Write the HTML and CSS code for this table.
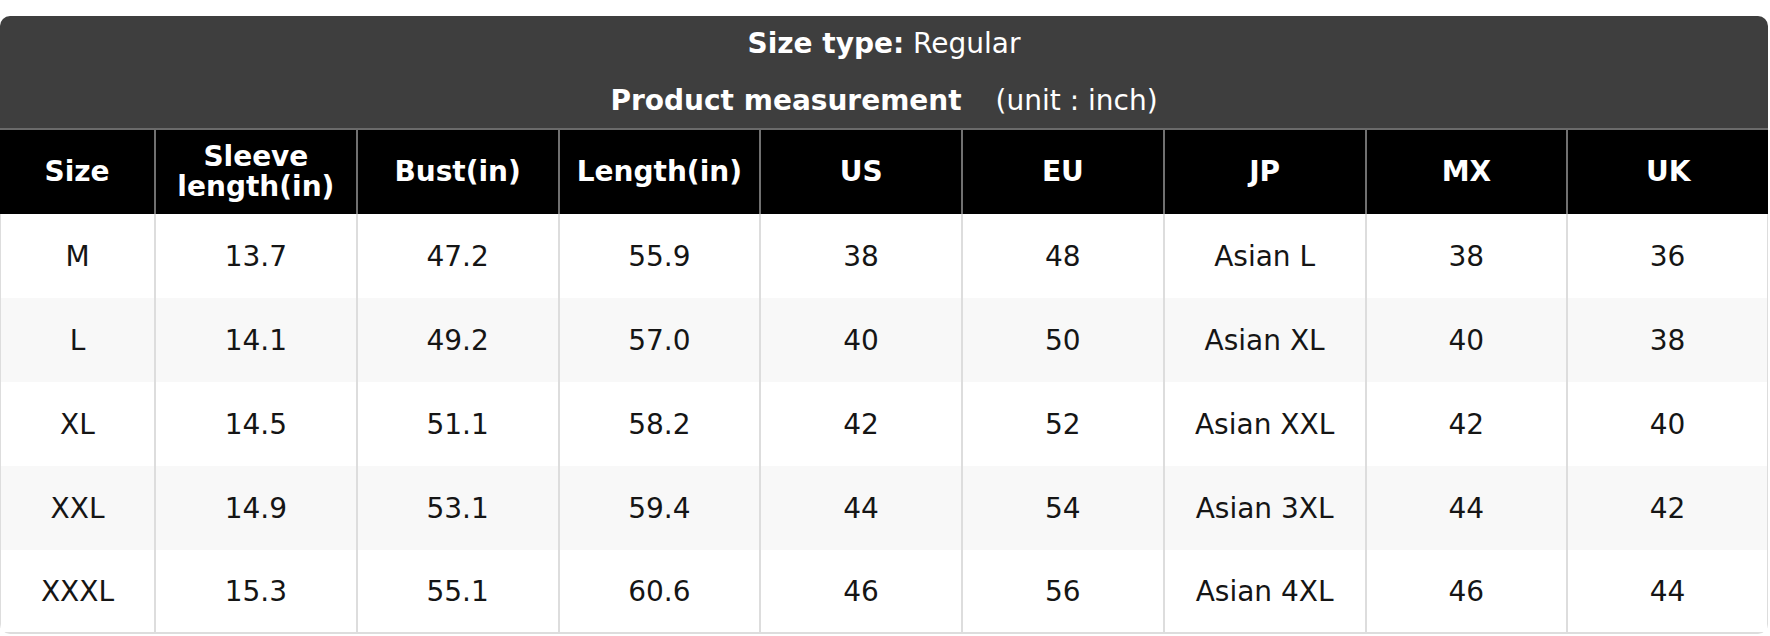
FILE: index.html
```html
<!DOCTYPE html>
<html lang="en">
<head>
<meta charset="utf-8">
<title>Size chart</title>
<link rel="stylesheet" href="styles.css">
</head>
<body>
<div class="chart">
  <div class="chart-head">
    <div class="chart-line"><b>Size type:</b> Regular</div>
    <div class="chart-line"><b>Product measurement</b> <span class="unit">(unit : inch)</span></div>
  </div>
  <table class="size-table">
    <colgroup>
      <col class="col-first">
      <col><col><col><col><col><col><col><col>
    </colgroup>
    <thead>
      <tr>
        <th>Size</th>
        <th>Sleeve<br>length(in)</th>
        <th>Bust(in)</th>
        <th>Length(in)</th>
        <th>US</th>
        <th>EU</th>
        <th>JP</th>
        <th>MX</th>
        <th>UK</th>
      </tr>
    </thead>
    <tbody>
      <tr><td>M</td><td>13.7</td><td>47.2</td><td>55.9</td><td>38</td><td>48</td><td>Asian L</td><td>38</td><td>36</td></tr>
      <tr><td>L</td><td>14.1</td><td>49.2</td><td>57.0</td><td>40</td><td>50</td><td>Asian XL</td><td>40</td><td>38</td></tr>
      <tr><td>XL</td><td>14.5</td><td>51.1</td><td>58.2</td><td>42</td><td>52</td><td>Asian XXL</td><td>42</td><td>40</td></tr>
      <tr><td>XXL</td><td>14.9</td><td>53.1</td><td>59.4</td><td>44</td><td>54</td><td>Asian 3XL</td><td>44</td><td>42</td></tr>
      <tr><td>XXXL</td><td>15.3</td><td>55.1</td><td>60.6</td><td>46</td><td>56</td><td>Asian 4XL</td><td>46</td><td>44</td></tr>
    </tbody>
  </table>
</div>
</body>
</html>
```

FILE: styles.css
```css
html, body {
  margin: 0;
  padding: 0;
  background: #ffffff;
}

body {
  font-family: "DejaVu Sans", "Liberation Sans", sans-serif;
  font-size: 28px;
  color: #151515;
}

.chart {
  margin-top: 16px;
  width: 1768px;
  border-radius: 10px;
  overflow: hidden;
}

.chart-head {
  background: #3e3e3e;
  color: #ffffff;
  text-align: center;
  padding: 7px 0 6px;
  display: flex;
  flex-direction: column;
  gap: 15px;
  border-bottom: 2px solid #6a6a6a;
}

.chart-line {
  line-height: 42px;
  white-space: nowrap;
}

.chart-line b {
  font-weight: 700;
}

.unit {
  margin-left: 25px;
  font-weight: 400;
}

.size-table {
  width: 100%;
  table-layout: fixed;
  border-collapse: separate;
  border-spacing: 0;
}

.col-first {
  width: 154px;
}

.size-table th {
  background: #000000;
  color: #ffffff;
  font-weight: 700;
  line-height: 30px;
  height: 84px;
  box-sizing: border-box;
  padding: 11px 4px 12px;
  vertical-align: middle;
  text-align: center;
  border-left: 2px solid #707070;
}

.size-table th:first-child {
  border-left: 0;
}

.size-table td {
  height: 84px;
  box-sizing: border-box;
  padding: 1px 4px 0;
  line-height: 42px;
  vertical-align: middle;
  text-align: center;
  background: #ffffff;
  border-left: 2px solid #dddddd;
}

.size-table td:first-child {
  border-left: 1px solid #dddddd;
}

.size-table td:last-child {
  border-right: 1px solid #dddddd;
}

.size-table tbody tr:nth-child(even) td {
  background: #f8f8f8;
}

.size-table tbody tr:last-child td {
  border-bottom: 2px solid #dddddd;
}
```
